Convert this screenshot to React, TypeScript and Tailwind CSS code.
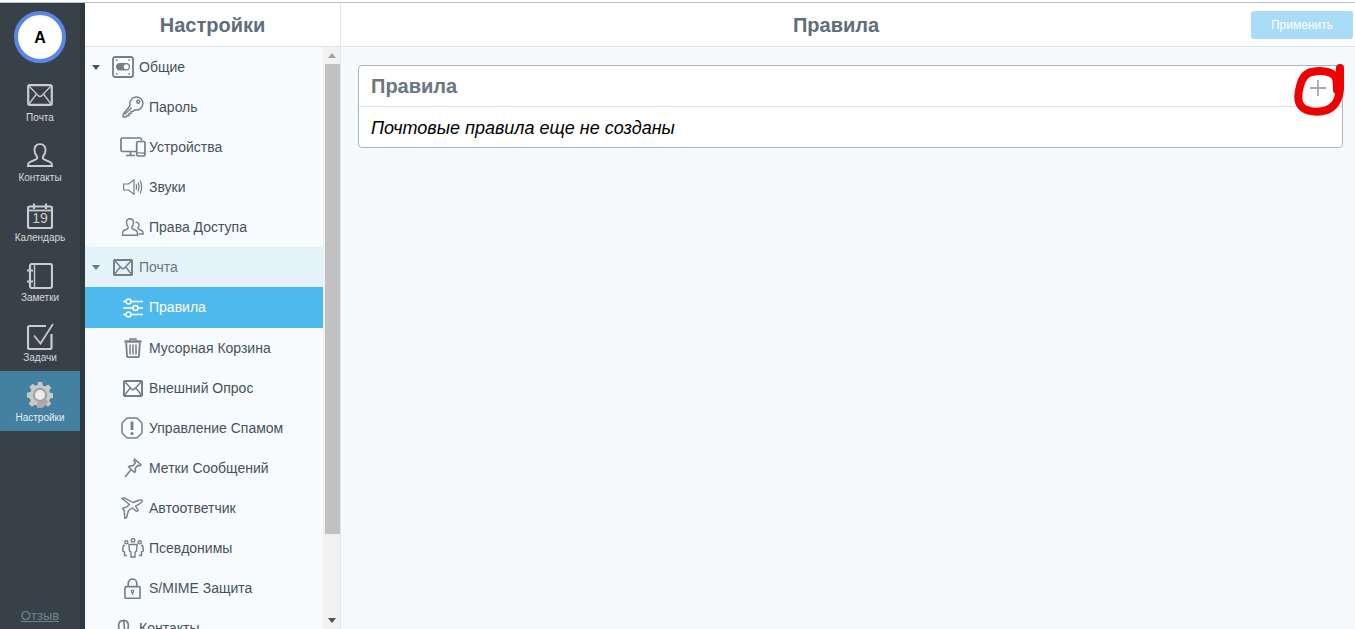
import React from "react";

const FONT = "font-['Liberation_Sans',Arial,sans-serif]";

type IP = { className?: string };

const MailIcon = ({ className, small }: IP & { small?: boolean }) => (
  <svg viewBox="0 0 26 22" className={className} fill="none" stroke="currentColor">
    <rect x="1.200" y="1.200" width="23.600" height="19.600" rx="1.500" strokeWidth={small ? 2.600 : 2.200} />
    <path d="M2 2 L11 11.500 Q13 13.500 15 11.500 L24 2 M2 20 L9.500 10 M24 20 L16.500 10" strokeWidth={small ? 1.900 : 1.300} />
  </svg>
);
const ContactIcon = ({ className }: IP) => (
  <svg viewBox="0 0 28 26" className={className} fill="none" stroke="currentColor" strokeWidth="2.100">
    <path d="M14 1.200c-4 0-6 2.800-6 6.200 0 3 1.200 5.400 2.600 7 .6 1.200.3 2.600-1 3.300L3 20.600c-1.400.7-2 1.700-2 3.400v1h26v-1c0-1.700-.6-2.700-2-3.400l-6.600-2.900c-1.300-.7-1.600-2.100-1-3.300 1.400-1.600 2.600-4 2.600-7 0-3.400-2-6.200-6-6.200z" />
  </svg>
);
const CalendarIcon = ({ className }: IP) => (
  <svg viewBox="0 0 26 26" className={className} fill="none" stroke="currentColor">
    <rect x="1" y="3.500" width="24" height="21.500" rx="1.500" strokeWidth="2.200" />
    <path d="M1 7.500H25" strokeWidth="1.800" />
    <path d="M7 0.500V6M19 0.500V6" strokeWidth="2.200" />
  </svg>
);
const NotesIcon = ({ className }: IP) => (
  <svg viewBox="0 0 26 26" className={className} fill="none" stroke="currentColor">
    <rect x="3" y="1" width="22" height="24" rx="2" strokeWidth="2.200" />
    <path d="M7.500 1V25" strokeWidth="1.400" />
    <path d="M0 7.500H6M0 18.500H6" strokeWidth="2.200" />
  </svg>
);
const TaskIcon = ({ className }: IP) => (
  <svg viewBox="0 0 27 27" className={className} fill="none" stroke="currentColor">
    <path d="M19 3H2.500A1.500 1.500 0 0 0 1 4.500V24.500A1.500 1.500 0 0 0 2.500 26H23A1.500 1.500 0 0 0 24.500 24.500V11" strokeWidth="2.200" />
    <path d="M7 12.500L13.500 20.500L26 1" strokeWidth="1.700" />
  </svg>
);
const GearIcon = () => (
  <svg viewBox="0 0 26 26" className="w-[26px] h-[26px]">
    <path
      fill="#c9c9c9"
      d="M10.800 0h4.400l.7 3.500 2.200.9 3-2 3.100 3.100-2 3 .9 2.200 3.500.7v4.400l-3.500.7-.9 2.200 2 3-3.100 3.100-3-2-2.200.9-.7 3.500h-4.400l-.7-3.500-2.200-.9-3 2-3.100-3.100 2-3-.9-2.200L0 15.200v-4.400l3.500-.7.9-2.200-2-3 3.100-3.100 3 2 2.200-.9z"
    />
    <path fill="#ababab" d="M13 13 L21.500 19.500 L19 23 L15.200 26 H10.800 L10 22.500 Z" />
    <circle cx="13" cy="13" r="7.200" fill="#a3a3a3" />
    <circle cx="13" cy="13" r="5" fill="#ececec" />
  </svg>
);

const ToggleIcon = ({ className }: IP) => (
  <svg viewBox="0 0 22 22" className={className} fill="none" stroke="currentColor">
    <rect x="1" y="1" width="20" height="20" rx="2" strokeWidth="1.800" />
    <rect x="4" y="7" width="14" height="7.500" rx="3.700" fill="currentColor" stroke="none" />
    <circle cx="14.200" cy="10.700" r="2.500" fill="#f7fbfd" stroke="none" />
    <path d="M4 4H5.500M16.500 4H18M4 18H5.500M16.500 18H18" strokeWidth="1.600" />
  </svg>
);
const KeyIcon = ({ className }: IP) => (
  <svg viewBox="0 0 22 22" className={className} fill="none" stroke="currentColor" strokeWidth="1.400">
    <path d="M8.200 9.500a6.500 6.500 0 1 1 4.500 4.300L11 15.500H9v2H7v2H5l-1 1.500H1.200v-3z" />
    <circle cx="16.200" cy="5.800" r="1.500" />
    <path d="M2.500 18.500L9.500 11.800" />
  </svg>
);
const DevicesIcon = ({ className }: IP) => (
  <svg viewBox="0 0 26 20" className={className} fill="none" stroke="currentColor">
    <path d="M16 14.500H2.500A1.500 1.500 0 0 1 1 13V2.500A1.500 1.500 0 0 1 2.500 1H20A1.500 1.500 0 0 1 21.500 2.500V3.500" strokeWidth="1.700" />
    <path d="M6 18.500H15M10.500 15V18.500" strokeWidth="1.700" />
    <rect x="16.700" y="4.500" width="8.300" height="14.500" rx="1.500" strokeWidth="1.700" />
    <path d="M17 16H25" strokeWidth="1.200" />
  </svg>
);
const SoundIcon = ({ className }: IP) => (
  <svg viewBox="0 0 20 16" className={className} fill="none" stroke="currentColor" strokeWidth="1.200">
    <path d="M.6 5H5.500L11 .8V15.200L5.500 11H.6z" />
    <path d="M13 5.200Q14.200 8 13 10.800M15 3.500Q17 8 15 12.500M17.200 1.500Q20 8 17.200 14.500" />
  </svg>
);
const UsersIcon = ({ className }: IP) => (
  <svg viewBox="0 0 22 18" className={className} fill="none" stroke="currentColor" strokeWidth="1.400">
    <path d="M8 .7c-2.200 0-3.500 1.700-3.500 3.800 0 1.800.7 3.200 1.500 4.200.4.800.2 1.700-.6 2.100L2 12.500c-1 .5-1.400 1.200-1.400 2.300v2.500h14.800v-2.500c0-1.100-.4-1.800-1.400-2.300l-3.400-1.700c-.8-.4-1-1.300-.6-2.100.8-1 1.500-2.400 1.500-4.200C11.500 2.400 10.200.7 8 .7z" />
    <path d="M13.500 4.500c1.700-.6 3.500.4 3.500 2.500 0 1.200-.5 2.200-1 2.800-.3.600 0 1.100.5 1.400l3 1.300c1 .5 1.500 1 1.500 2v1.500h-4.500" />
  </svg>
);
const RulesIcon = ({ className }: IP) => (
  <svg viewBox="0 0 20 20" className={className} fill="none" stroke="currentColor" strokeWidth="1.500">
    <path d="M0 3.500H3M8 3.500H20M0 10H10M15 10H20M0 16.500H3M8 16.500H20" />
    <circle cx="5.500" cy="3.500" r="2.500" />
    <circle cx="12.500" cy="10" r="2.500" />
    <circle cx="5.500" cy="16.500" r="2.500" />
  </svg>
);
const TrashIcon = ({ className }: IP) => (
  <svg viewBox="0 0 18 20" className={className} fill="none" stroke="currentColor">
    <path d="M.5 3.500H17.500" strokeWidth="2.400" />
    <path d="M6 2.400V1H12V2.400" strokeWidth="1.400" />
    <path d="M2.200 5L3 18A1.200 1.200 0 0 0 4.200 19.200H13.800A1.200 1.200 0 0 0 15 18L15.800 5" strokeWidth="1.800" />
    <path d="M6 6.500V16.500M9 6.500V16.500M12 6.500V16.500" strokeWidth="1.500" />
  </svg>
);
const WarnIcon = ({ className }: IP) => (
  <svg viewBox="0 0 22 22" className={className} fill="none" stroke="currentColor">
    <path d="M7 1H15Q16 1 17 2L20 5Q21 6 21 7V15Q21 16 20 17L17 20Q16 21 15 21H7Q6 21 5 20L2 17Q1 16 1 15V7Q1 6 2 5L5 2Q6 1 7 1Z" strokeWidth="1.500" />
    <path d="M11 4.500V13" strokeWidth="2.800" />
    <circle cx="11" cy="16.500" r="1.600" fill="currentColor" stroke="none" />
  </svg>
);
const PinIcon = ({ className }: IP) => (
  <svg viewBox="0 0 18 20" className={className} fill="none" stroke="currentColor" strokeWidth="1.500" strokeLinejoin="round">
    <path d="M10.500 1L17 6.800L15.500 8L14 7.200L11 10.500C11.800 12 11.500 13.500 10.500 14.500L4.500 8.800C5.800 7.800 7.300 7.400 8.800 8L11.500 4.500L10 3z" />
    <path d="M7 11.800L1 19" />
  </svg>
);
const PlaneIcon = ({ className }: IP) => (
  <svg viewBox="0 0 22 22" className={className} fill="none" stroke="currentColor" strokeWidth="1.400" strokeLinejoin="round">
    <path d="M.8 1.500L3 .8L12 5.500L17 3.500C19 2.800 21 3 21.300 3.800C21.500 4.800 20 6 18.500 6.800L14.500 9L17.300 13.500L15.500 14.500L11.500 11L7.500 13.500L5.500 20.800L3.800 21.200L3.200 13.500L1.500 11.500L2.500 10.800L6 9.800L8.500 7.500Z" />
  </svg>
);
const AliasIcon = ({ className }: IP) => (
  <svg viewBox="0 0 22 20" className={className} fill="none" stroke="currentColor" strokeWidth="1.400">
    <circle cx="11" cy="2.300" r="1.800" />
    <circle cx="4.300" cy="4.300" r="1.600" />
    <circle cx="17.700" cy="4.300" r="1.600" />
    <path d="M7 6.500H15L14.500 13L13 14V19H9V14L7.500 13Z" />
    <path d="M3 7.500H1.500C1 9 .7 11.500 .8 13L2.500 14V17.500H5M19 7.500H20.500C21 9 21.300 11.500 21.200 13L19.500 14V17.500H17" />
  </svg>
);
const LockIcon = ({ className }: IP) => (
  <svg viewBox="0 0 18 22" className={className} fill="none" stroke="currentColor">
    <rect x="1" y="9" width="16" height="12.500" rx="1.300" strokeWidth="1.700" />
    <path d="M4.500 9V5.500A4.500 4.500 0 0 1 13.500 5.500V9" strokeWidth="1.700" />
    <circle cx="9" cy="14" r="1.300" strokeWidth="1.300" />
    <path d="M9 15.300V18" strokeWidth="1.300" />
  </svg>
);
const PersonHead = ({ className }: IP) => (
  <svg viewBox="0 0 12 16" className={className} fill="none" stroke="currentColor" strokeWidth="1.500">
    <path d="M6 1C3 1 1.500 3 1.500 6C1.500 9 3 11 4 12V16M8 16V12C9 11 10.500 9 10.500 6C10.500 3 9 1 6 1Z" />
  </svg>
);

const Caret = ({ dim }: { dim?: boolean }) => (
  <span
    className={`w-0 h-0 border-l-[4px] border-r-[4px] border-t-[5px] border-l-transparent border-r-transparent ${
      dim ? "border-t-[#6f7b84]" : "border-t-[#4a545c]"
    }`}
  />
);

const navItems = [
  { label: "Почта", icon: <MailIcon className="w-[26px] h-[22px]" />, pad: "pt-[13px]", gap: "mt-[6px]" },
  { label: "Контакты", icon: <ContactIcon className="w-[26px] h-[24px]" />, pad: "pt-[12px]", gap: "mt-[5px]" },
  { label: "Календарь", icon: <CalendarIcon className="w-[26px] h-[26px]" />, pad: "pt-[12px]", gap: "mt-[3px]" },
  { label: "Заметки", icon: <NotesIcon className="w-[26px] h-[26px]" />, pad: "pt-[12px]", gap: "mt-[3px]" },
  { label: "Задачи", icon: <TaskIcon className="w-[27px] h-[27px]" />, pad: "pt-[12px]", gap: "mt-[2px]" },
];

type Row = {
  label: string;
  icon: React.ReactNode;
};

const subA: Row[] = [
  { label: "Пароль", icon: <KeyIcon className="w-[22px] h-[22px]" /> },
  { label: "Устройства", icon: <DevicesIcon className="w-[26px] h-[20px] -ml-[2px]" /> },
  { label: "Звуки", icon: <SoundIcon className="w-[20px] h-[16px] ml-px" /> },
  { label: "Права Доступа", icon: <UsersIcon className="w-[22px] h-[18px]" /> },
];
const subB: Row[] = [
  { label: "Мусорная Корзина", icon: <TrashIcon className="w-[18px] h-[20px] ml-[2px]" /> },
  { label: "Внешний Опрос", icon: <MailIcon small className="w-[20px] h-[17px] ml-px" /> },
  { label: "Управление Спамом", icon: <WarnIcon className="w-[22px] h-[22px] -ml-px" /> },
  { label: "Метки Сообщений", icon: <PinIcon className="w-[18px] h-[20px] ml-[2px]" /> },
  { label: "Автоответчик", icon: <PlaneIcon className="w-[22px] h-[22px] -ml-px" /> },
  { label: "Псевдонимы", icon: <AliasIcon className="w-[22px] h-[20px]" /> },
  { label: "S/MIME Защита", icon: <LockIcon className="w-[17px] h-[21px] ml-[2px]" /> },
];

const SubRow = ({ row }: { row: Row }) => (
  <div className="h-10 shrink-0 flex items-center text-[14px] text-[#47515b]">
    <span className="w-[64px] pl-[37px] flex items-center justify-start text-[#737f88]">{row.icon}</span>
    <span>{row.label}</span>
  </div>
);

export default function App() {
  return (
    <div className={`h-[629px] w-[1355px] overflow-hidden flex flex-col bg-white ${FONT}`}>
      <div className="h-[2px] bg-white shrink-0" />
      <div className="h-px bg-[#b6c3ce] shrink-0" />
      <div className="flex flex-1 min-h-0">
        {/* App rail */}
        <aside className="w-[85px] shrink-0 bg-[#2f383f] pr-[5px] flex">
          <div className="w-[80px] bg-[#384148] flex flex-col">
            <div className="h-[68px] shrink-0 flex items-start justify-center pt-[8px]">
              <div className="w-[52px] h-[52px] rounded-full bg-white border-[4px] border-[#5b85ea] flex items-center justify-center pt-px text-[16px] font-bold text-black">
                A
              </div>
            </div>
            {navItems.map((n) => (
              <div key={n.label} className={`h-[60px] shrink-0 flex flex-col items-center text-[#c9cccf] ${n.pad}`}>
                {n.label === "Календарь" ? (
                  <div className="relative w-[26px] h-[26px]">
                    {n.icon}
                    <span className="absolute left-0 right-0 top-[7px] text-center text-[14px] leading-[16px] text-[#c9cccf]">19</span>
                  </div>
                ) : (
                  n.icon
                )}
                <span className={`${n.gap} text-[10px] leading-[12px] text-[#d4dadd]`}>{n.label}</span>
              </div>
            ))}
            <div className="h-[60px] shrink-0 bg-[#44809f] flex flex-col items-center pt-[11px]">
              <GearIcon />
              <span className="mt-[4px] text-[10px] leading-[12px] text-[#e6eef2]">Настройки</span>
            </div>
            <div className="flex-1 flex items-end justify-center pb-[5px]">
              <span className="text-[13px] leading-[16px] underline text-[#6f8691]">Отзыв</span>
            </div>
          </div>
        </aside>

        {/* Settings menu */}
        <section className="w-[256px] shrink-0 flex flex-col border-r border-[#e2e6e9]">
          <header className="h-[44px] shrink-0 bg-white border-b border-[#e0e3e5] flex items-center justify-center text-[20px] font-bold text-[#616d78]">
            Настройки
          </header>
          <div className="flex-1 min-h-0 flex">
            <div className="w-[238px] shrink-0 bg-[#f7fbfd] overflow-hidden flex flex-col">
              <div className="h-10 shrink-0 flex items-center text-[14px] text-[#47515b]">
                <span className="w-[27px] pl-[7px] flex"><Caret /></span>
                <span className="w-[27px] text-[#737f88] flex"><ToggleIcon className="w-[22px] h-[22px]" /></span>
                <span>Общие</span>
              </div>
              {subA.map((r) => (
                <SubRow key={r.label} row={r} />
              ))}
              <div className="h-10 shrink-0 bg-[#e4f3fa] flex items-center text-[14px] text-[#6d7780]">
                <span className="w-[27px] pl-[7px] flex"><Caret dim /></span>
                <span className="w-[27px] text-[#737f88] flex pl-px"><MailIcon small className="w-[20px] h-[17px]" /></span>
                <span>Почта</span>
              </div>
              <div className="h-[41px] shrink-0 bg-[#4db9ec] flex items-center text-[14px] text-white">
                <span className="w-[64px] pl-[38px] flex"><RulesIcon className="w-[20px] h-[20px]" /></span>
                <span>Правила</span>
              </div>
              {subB.map((r) => (
                <SubRow key={r.label} row={r} />
              ))}
              <div className="h-10 shrink-0 flex items-center text-[14px] text-[#47515b]">
                <span className="w-[54px] pl-[32px] flex text-[#737f88]"><PersonHead className="w-[13px] h-[18px]" /></span>
                <span>Контакты</span>
              </div>
            </div>
            {/* Scrollbar */}
            <div className="w-[17px] shrink-0 bg-[#f1f1f1] flex flex-col items-stretch">
              <div className="h-[17px] shrink-0 flex items-center justify-center">
                <span className="w-0 h-0 border-l-[4px] border-r-[4px] border-b-[5px] border-l-transparent border-r-transparent border-b-[#a3a3a3]" />
              </div>
              <div className="h-[470px] shrink-0 bg-[#c1c1c1] ml-[2px]" />
              <div className="flex-1" />
              <div className="h-[17px] shrink-0 flex items-center justify-center">
                <span className="w-0 h-0 border-l-[4px] border-r-[4px] border-t-[5px] border-l-transparent border-r-transparent border-t-[#505050]" />
              </div>
            </div>
          </div>
        </section>

        {/* Main */}
        <main className="flex-1 min-w-0 flex flex-col bg-[#f6fafc]">
          <header className="relative h-[44px] shrink-0 bg-white border-b border-[#e0e3e5] flex items-center justify-end pr-[2px] text-[20px] font-bold text-[#616d78]">
            <span className="absolute left-0 right-[24px] text-center">Правила</span>
            <button className="relative w-[102px] h-[28px] rounded-[3px] bg-[#a8dcf7] text-white text-[12px] font-normal">
              Применить
            </button>
          </header>
          <div className="pt-[18px] pl-[17px] pr-[12px]">
            <div className="relative h-[83px] bg-white border border-[#abb5bc] rounded-[4px] flex flex-col">
              <div className="h-[41px] shrink-0 border-b border-[#e3e5e7] flex items-center justify-between pl-[12px] pr-[16px]">
                <span className="text-[20px] font-bold text-[#6a7680]">Правила</span>
                <svg viewBox="0 0 16 16" className="w-4 h-4 mt-1" fill="none" stroke="#a3aab0" strokeWidth="1.800">
                  <path d="M8 0V16M0 8H16" />
                </svg>
              </div>
              <div className="flex-1 flex items-center pl-[12px] pt-[2px] text-[18px] italic text-black">
                Почтовые правила еще не созданы
              </div>
              {/* Red annotation */}
              <svg viewBox="0 0 50 52" className="absolute left-[935px] top-[-2px] w-[50px] h-[52px]" fill="none" stroke="#f00000" strokeWidth="8" strokeLinecap="round" strokeLinejoin="round">
                <path d="M46 4 C46 12 47 18 46 25 C45 35 42 42 33 46 C24 49 12 48 7 42 C3 37 4 29 6 22 C8 14 11 9 18 8 C26 6 36 7 41 12 C43 15 43 20 43 26" />
              </svg>
            </div>
          </div>
        </main>
      </div>
    </div>
  );
}
